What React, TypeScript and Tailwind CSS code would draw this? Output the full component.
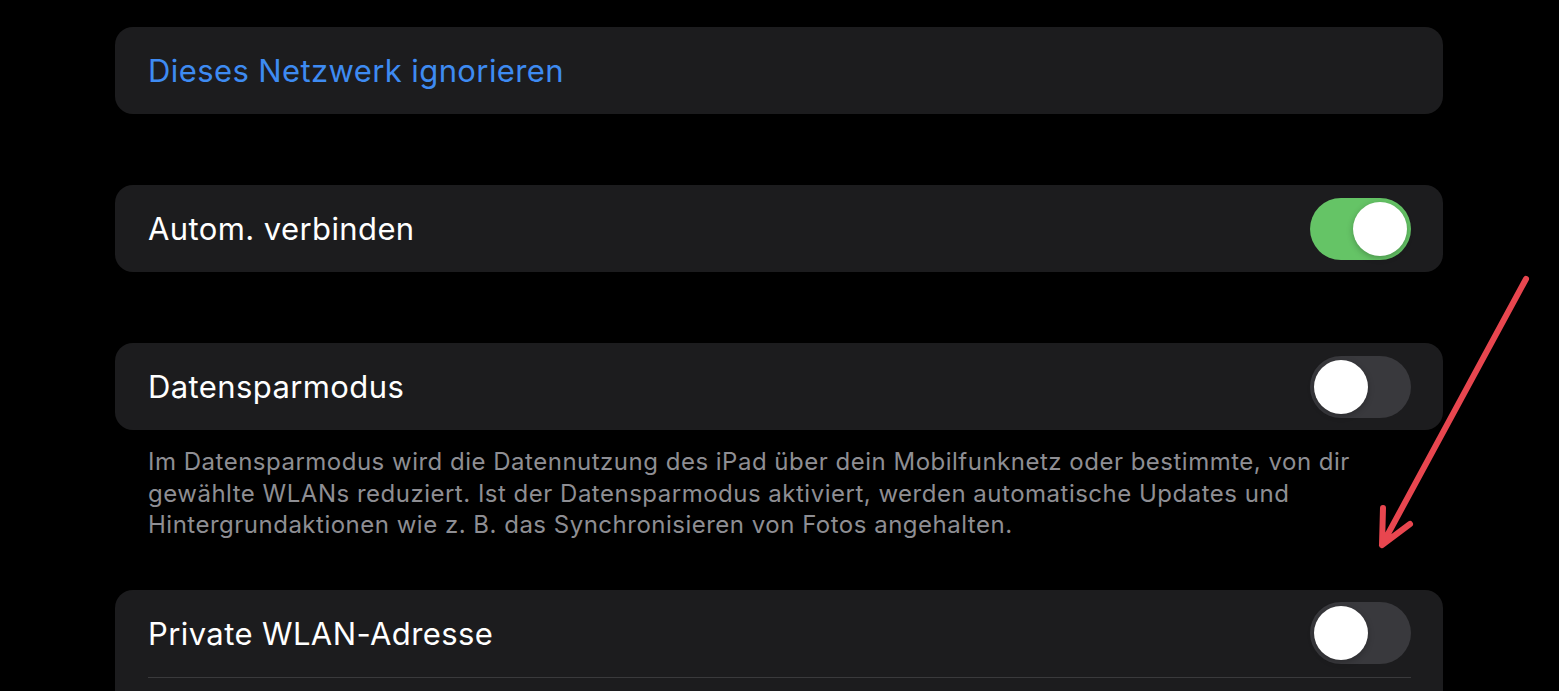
import React from "react"

function Toggle({ on }: { on: boolean }) {
  return (
    <div
      className={`relative h-[62px] w-[101px] rounded-full ${on ? "bg-[#65c466]" : "bg-[#39393d]"}`}
    >
      <div
        className={`absolute top-[4px] h-[54px] w-[54px] rounded-full bg-white shadow-[0_2px_6px_rgba(0,0,0,0.25)] ${on ? "right-[4px]" : "left-[4px]"}`}
      />
    </div>
  )
}

function Row({ label, toggle, blue }: { label: string; toggle?: boolean; blue?: boolean }) {
  return (
    <div className="flex h-[87px] items-center justify-between px-[33px] pr-[32px]">
      <span className={`pt-[2px] text-[31px] tracking-[0.4px] ${blue ? "text-[#3e8bf2]" : "text-white"}`}>
        {label}
      </span>
      {toggle !== undefined && <Toggle on={toggle} />}
    </div>
  )
}

export default function App() {
  return (
    <div
      className="relative h-[691px] w-full overflow-hidden bg-black"
      style={{ fontFamily: "Inter, 'Noto Sans', sans-serif" }}
    >
      <div className="flex flex-col px-[115px] pr-[116px] pt-[27px]">
        <div className="rounded-[18px] bg-[#1c1c1e]">
          <Row label="Dieses Netzwerk ignorieren" blue />
        </div>

        <div className="mt-[71px] rounded-[18px] bg-[#1c1c1e]">
          <Row label="Autom. verbinden" toggle={true} />
        </div>

        <div className="mt-[71px] rounded-[18px] bg-[#1c1c1e]">
          <Row label="Datensparmodus" toggle={false} />
        </div>
        <div className="px-[33px] pt-[16px] text-[24px] leading-[31.5px] tracking-[0.5px] text-[#8e8e93]">
          <div>Im Datensparmodus wird die Datennutzung des iPad über dein Mobilfunknetz oder bestimmte, von dir</div>
          <div>gewählte WLANs reduziert. Ist der Datensparmodus aktiviert, werden automatische Updates und</div>
          <div>Hintergrundaktionen wie z. B. das Synchronisieren von Fotos angehalten.</div>
        </div>

        <div className="mt-[49px] rounded-[18px] bg-[#1c1c1e]">
          <Row label="Private WLAN-Adresse" toggle={false} />
          <div className="ml-[33px] mr-[32px] h-px bg-[#3a3a3c]" />
          <div className="h-[87px]" />
        </div>
      </div>

      <svg
        className="pointer-events-none absolute left-0 top-0"
        width="1559"
        height="691"
        viewBox="0 0 1559 691"
        fill="none"
      >
        <path
          d="M1526 279 L1382 545 M1383 508 L1382 545 L1410 524"
          stroke="#e8464f"
          strokeWidth="6"
          strokeLinecap="round"
          strokeLinejoin="round"
        />
      </svg>
    </div>
  )
}
